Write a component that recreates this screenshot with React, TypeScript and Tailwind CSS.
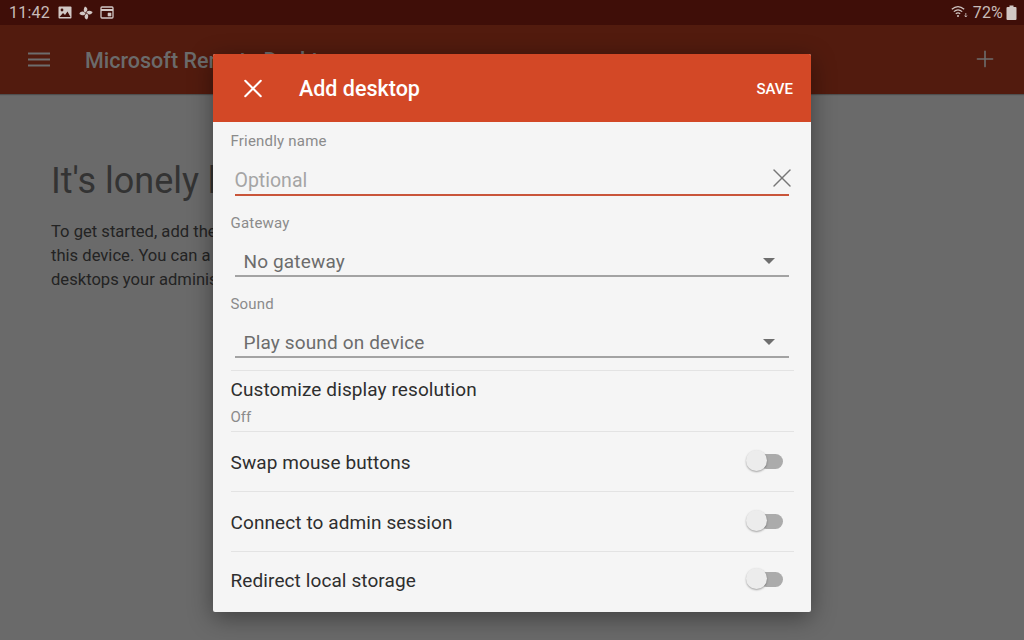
import { Plus, X } from "lucide-react";

const font = { fontFamily: "Roboto, sans-serif" };

function Toggle() {
  return (
    <div className="relative w-[38px] h-[24px] shrink-0 mb-[2px]">
      <div className="absolute left-[14px] top-[5px] w-[24px] h-[15px] rounded-full bg-[#ababab]" />
      <div className="absolute left-[1px] top-[1px] w-[21px] h-[21px] rounded-full bg-[#ececec] shadow-[0_1px_2px_rgba(0,0,0,0.35)]" />
    </div>
  );
}

function SelectField({ label, value }: { label: string; value: string }) {
  return (
    <div>
      <div className="h-[27px] flex items-center text-[15px] tracking-[0.2px] text-[#8b8b8b]">{label}</div>
      <div className="ml-1 mr-[5px] mt-[12px] h-[28px] pl-[9px] pr-[14px] flex items-center justify-between border-b-2 border-[#a3a3a3] text-[19px] tracking-[0.15px] text-[#6c6c6c]">
        <span>{value}</span>
        <span className="w-0 h-0 border-x-[6px] border-x-transparent border-t-[6px] border-t-[#6e6e6e] mb-[3px]" />
      </div>
    </div>
  );
}

function SwitchRow({ label, className }: { label: string; className: string }) {
  return (
    <div className={`${className} h-[60px] flex items-center justify-between pr-[11px] border-t border-[#e3e3e3] text-[19px] tracking-[0.1px] text-[#2e2e2e]`}>
      <span className="pt-[3px]">{label}</span>
      <Toggle />
    </div>
  );
}

export default function App() {
  return (
    <div className="relative w-[1024px] h-[640px] overflow-hidden flex flex-col bg-[#6a6a6a]" style={font}>
      {/* status bar */}
      <div className="h-[25px] bg-[#3f0e08] flex items-center justify-between pl-[9px] pr-[7px] text-[#c8bcb9]">
        <div className="flex items-center gap-[7px]">
          <span className="text-[16px] tracking-[0.2px] mr-[1px]">11:42</span>
          <svg width="14" height="13" viewBox="0 0 14 13">
            <rect x="0.5" y="0.5" width="13" height="12" rx="1" fill="#d2c8c5" />
            <circle cx="4" cy="4" r="1.4" fill="#3f0e08" />
            <path d="M1.5 11l3.5-4 2 2 2.5-3.5 3 5.5z" fill="#3f0e08" />
          </svg>
          <svg width="14" height="14" viewBox="0 0 14 14" fill="#d2c8c5">
            <path d="M6.6 6.6C4.6 6 4 3.4 6 0.4c2 .6 2.8 2.4 2.2 4.2zM7.4 6.6C8 4.6 10.6 4 13.6 6c-.6 2-2.4 2.8-4.2 2.2zM7.4 7.4c2 .6 2.6 3.2.6 6.2-2-.6-2.8-2.4-2.2-4.2zM6.6 7.4C6 9.4 3.4 10 .4 8c.6-2 2.4-2.8 4.2-2.2z" />
          </svg>
          <svg width="14" height="13" viewBox="0 0 14 13" fill="none" stroke="#d2c8c5">
            <rect x="1" y="1" width="12" height="11" rx="1" strokeWidth="1.3" />
            <path d="M1 4h12" strokeWidth="2" />
            <path d="M8 7h3v3H8z" fill="#d2c8c5" strokeWidth="0.6" />
          </svg>
        </div>
        <div className="flex items-center">
          <svg width="17" height="15" viewBox="0 0 17 15" fill="none" stroke="#d2c8c5" strokeWidth="1.2" className="mr-[5px]">
            <path d="M0.8 4.2C4.6 0.9 9.4 0.9 13.2 4.2" />
            <path d="M2.8 6.6C5.5 4.3 8.5 4.3 11.2 6.6" />
            <path d="M4.8 8.8C6.3 7.6 7.7 7.6 9.2 8.8" />
            <circle cx="7" cy="11" r="1" fill="#d2c8c5" stroke="none" />
            <path d="M14.8 8v4M13.6 10.6l1.2 1.4 1.2-1.4" strokeWidth="0.8" />
          </svg>
          <span className="text-[16px] tracking-[0.2px]">72%</span>
          <svg width="11" height="15" viewBox="0 0 11 15" className="ml-[3px]">
            <path d="M3.5 0.5h4v1.5h2a1 1 0 0 1 1 1v11a1 1 0 0 1-1 1h-8a1 1 0 0 1-1-1V3a1 1 0 0 1 1-1h2z" fill="#d2c8c5" />
          </svg>
        </div>
      </div>

      {/* app bar */}
      <div className="h-[69px] bg-[#521b0e] flex items-center pl-[28px] pr-[27px] shadow-[0_1px_1px_rgba(0,0,0,0.25)]">
        <svg width="22" height="15" viewBox="0 0 22 15" stroke="#6d6d6d" strokeWidth="2" className="mb-[1px]">
          <path d="M0 1.5h22M0 7.5h22M0 13.5h22" />
        </svg>
        <span className="ml-[35px] text-[21.5px] font-medium text-[#6b6b6b] mt-[3px]">Microsoft Remote Desktop</span>
        <Plus size={26} strokeWidth={1.5} color="#6d6d6d" className="ml-auto -mt-[1px] -mr-[1px]" />
      </div>

      {/* empty state behind the dialog */}
      <div className="pl-[51px] pt-[63px]">
        <h1 className="text-[36px] leading-[48px] text-[#333333]">It's lonely here.</h1>
        <p className="mt-[15px] text-[16.6px] leading-[24px] text-[#232323]">
          To get started, add the
          <br />
          this device. You can a
          <br />
          desktops your adminis
        </p>
      </div>

      {/* dialog */}
      <div className="absolute left-[213px] top-[54px] w-[598px] h-[558px] rounded-[2px] overflow-hidden bg-[#f5f5f5] shadow-[0_6px_24px_rgba(0,0,0,0.4)]">
        <div className="h-[68px] bg-[#d34826] flex items-center pl-[24px] pr-[18px] text-white">
          <X size={32} strokeWidth={1.6} className="pt-[1px]" />
          <span className="ml-[30px] mt-[2px] text-[21.5px] font-medium">Add desktop</span>
          <span className="ml-auto mt-[2px] text-[15px] font-medium">SAVE</span>
        </div>

        <div className="pl-[17.5px] pr-[17px]">
          <div className="h-[39px] flex items-center text-[15px] tracking-[0.2px] text-[#8b8b8b]">Friendly name</div>
          <div className="ml-1 mr-[5px] h-[35px] flex items-center justify-between border-b-2 border-[#c9553a] text-[19.5px] text-[#a5a5a5]">
            <span className="pt-[7px]">Optional</span>
            <X size={32} strokeWidth={1.05} color="#777777" className="-mr-[9px] -my-[2px]" />
          </div>

          <div className="mt-[14px]">
            <SelectField label="Gateway" value="No gateway" />
          </div>
          <div className="mt-[14px]">
            <SelectField label="Sound" value="Play sound on device" />
          </div>

          <div className="mt-[12px] h-[61px] border-t border-[#e3e3e3] pt-[7px]">
            <div className="h-[24px] flex items-center text-[19px] tracking-[0.1px] text-[#2e2e2e]">Customize display resolution</div>
            <div className="mt-[5px] h-[20px] flex items-center text-[15px] text-[#8b8b8b]">Off</div>
          </div>
          <SwitchRow label="Swap mouse buttons" className="" />
          <SwitchRow label="Connect to admin session" className="" />
          <SwitchRow label="Redirect local storage" className="pb-[4px]" />
        </div>
      </div>
    </div>
  );
}
